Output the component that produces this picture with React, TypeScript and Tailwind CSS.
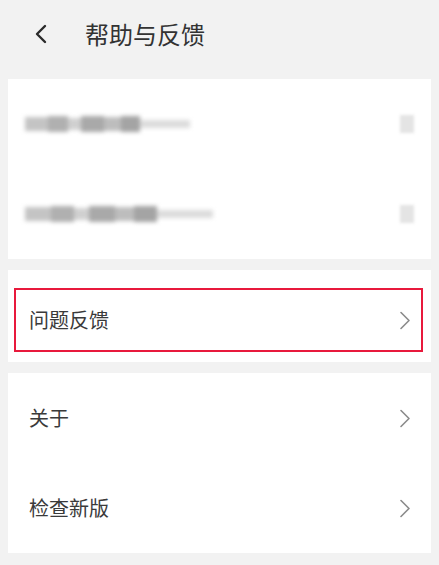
import React from 'react';

const font = { fontFamily: '"Noto Sans CJK SC", "Noto Sans", sans-serif' };

const Chevron = () => (
  <svg width="12" height="19" viewBox="0 0 12 19" fill="none" className="shrink-0">
    <path d="M2 1.5 L10 9.5 L2 17.5" stroke="#8a8a8a" strokeWidth="1.6" strokeLinecap="round" strokeLinejoin="round" />
  </svg>
);

// blurred placeholder rows (the screenshot has these pixelated out)
const BlurRow = ({ width }: { width: number }) => (
  <div className="flex h-[90px] items-center justify-between pl-[17px] pr-[17px]">
    <div className="flex h-[20px] items-center blur-[2px]" style={{ width }}>
      <div className="h-[14px] w-[14%] bg-[#c4c4c4]" />
      <div className="h-[16px] w-[12%] bg-[#b0b0b0]" />
      <div className="h-[12px] w-[8%] bg-[#d0d0d0]" />
      <div className="h-[16px] w-[14%] bg-[#a9a9a9]" />
      <div className="h-[14px] w-[10%] bg-[#bdbdbd]" />
      <div className="h-[16px] w-[12%] bg-[#a4a4a4]" />
      <div className="h-[8px] flex-1 bg-[#dcdcdc]" />
    </div>
    <div className="h-[18px] w-[14px] bg-[#e4e4e4] blur-[1.5px]" />
  </div>
);

const Row = ({ label }: { label: string }) => (
  <div className="flex h-[90px] items-center justify-between pl-[21px] pr-[20px]">
    <span className="text-[20px] text-[#3a3a3a]">{label}</span>
    <Chevron />
  </div>
);

export default function App() {
  return (
    <div className="min-h-screen bg-[#f2f2f2] pb-[12px]" style={font}>
      <div className="flex h-[79px] items-center pl-[34px] pb-[12px]">
        <svg width="14" height="20" viewBox="0 0 14 20" fill="none">
          <path d="M11 2 L3 10 L11 18" stroke="#2a2a2a" strokeWidth="2.4" strokeLinecap="round" strokeLinejoin="round" />
        </svg>
        <h1 className="ml-[37px] text-[24px] font-normal text-[#333]">帮助与反馈</h1>
      </div>

      <div className="mx-[8px] flex flex-col gap-[11px]">
        <div className="bg-white">
          <BlurRow width={165} />
          <BlurRow width={188} />
        </div>

        <div className="bg-white pt-[18px] pb-[10px] pl-[6px] pr-[8px]">
          <div className="flex h-[64px] items-center justify-between border-2 border-[#e8193c] pl-[13px] pr-[10px]">
            <span className="text-[20px] text-[#3a3a3a]">问题反馈</span>
            <Chevron />
          </div>
        </div>

        <div className="bg-white">
          <Row label="关于" />
          <Row label="检查新版" />
        </div>
      </div>
    </div>
  );
}
